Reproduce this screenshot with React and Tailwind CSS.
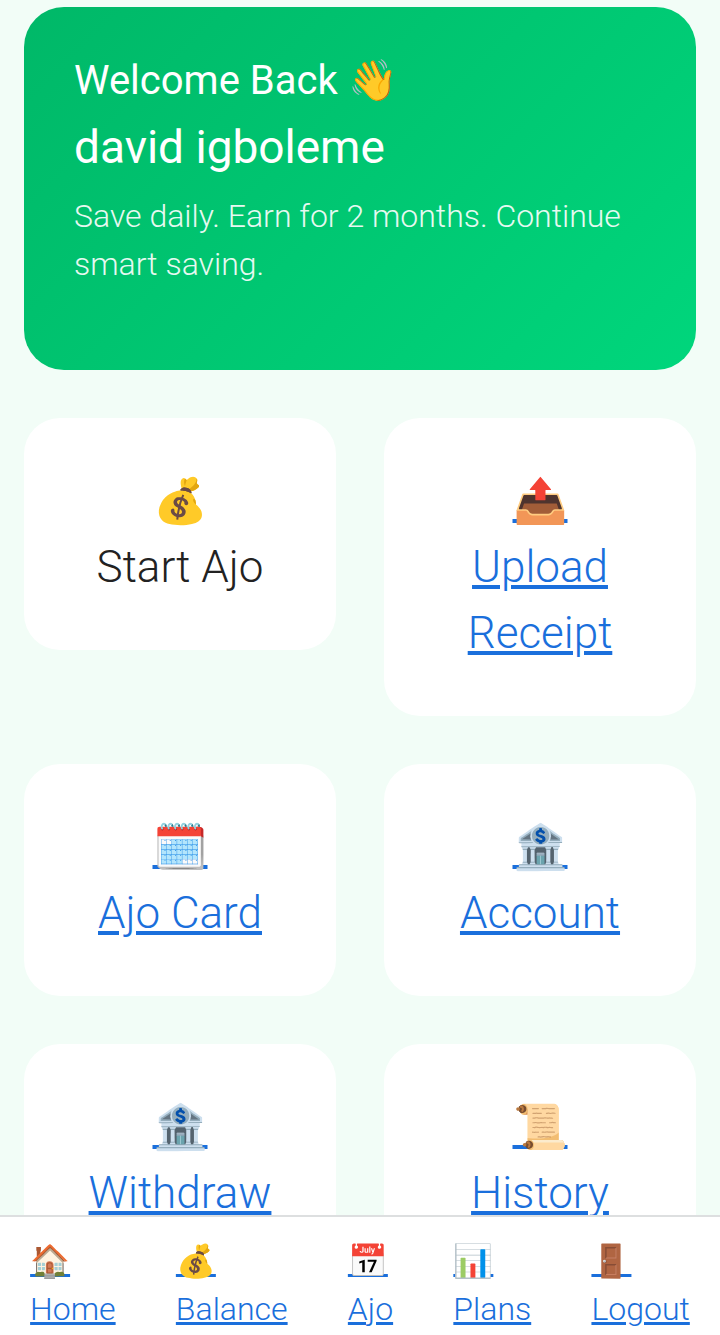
const cards = [
  { icon: "💰", label: "Start Ajo" },
  { icon: "📤", label: "Upload Receipt", href: "#upload" },
  { icon: "🗓️", label: "Ajo Card", href: "#card" },
  { icon: "🏦", label: "Account", href: "#account" },
  { icon: "🏦", label: "Withdraw", href: "#withdraw" },
  { icon: "📜", label: "History", href: "#history" },
];

const links = [
  { icon: "🏠", label: "Home", href: "#home" },
  { icon: "💰", label: "Balance", href: "#balance" },
  { icon: "📅", label: "Ajo", href: "#ajo" },
  { icon: "📊", label: "Plans", href: "#plans" },
  { icon: "🚪", label: "Logout", href: "#logout" },
];

export default function App() {
  return (
    <div className="min-h-screen bg-[#f2fdf7] px-6 pt-[7px] font-[Roboto,sans-serif] font-light text-[#222222]">
      <header className="rounded-[40px] bg-linear-135 from-[#00b868] to-[#00d67c] px-[50px] pt-11 pb-[82px] text-white">
        <p className="text-[40px] leading-[60px] font-[380]">Welcome Back 👋</p>
        <h1 className="mt-0.5 text-[46px] leading-[68px] font-[380]">david igboleme</h1>
        <p className="mt-[11px] text-[32px] leading-[48px] font-[320] opacity-90">
          Save daily. Earn for 2 months. Continue smart saving.
        </p>
      </header>

      <main className="mt-12 grid grid-cols-2 items-start gap-12">
        {cards.map(({ icon, label, href }) => (
          <div key={label} className="rounded-[36px] bg-white p-[50px] text-center text-[44px] leading-[66px]">
            {href ? (
              <a href={href} className="text-[#1a6fdc] underline">
                {icon}
                <br />
                {label}
              </a>
            ) : (
              <button type="button" className="w-full">
                {icon}
                <br />
                {label}
              </button>
            )}
          </div>
        ))}
      </main>

      <nav className="fixed inset-x-0 bottom-0 flex justify-around border-t-2 border-[#dddfe0] bg-white pt-5 pb-0.5 text-[32px] leading-[48px]">
        {links.map(({ icon, label, href }) => (
          <a key={label} href={href} className="text-[#1a6fdc] underline">
            {icon}
            <br />
            {label}
          </a>
        ))}
      </nav>
    </div>
  );
}
